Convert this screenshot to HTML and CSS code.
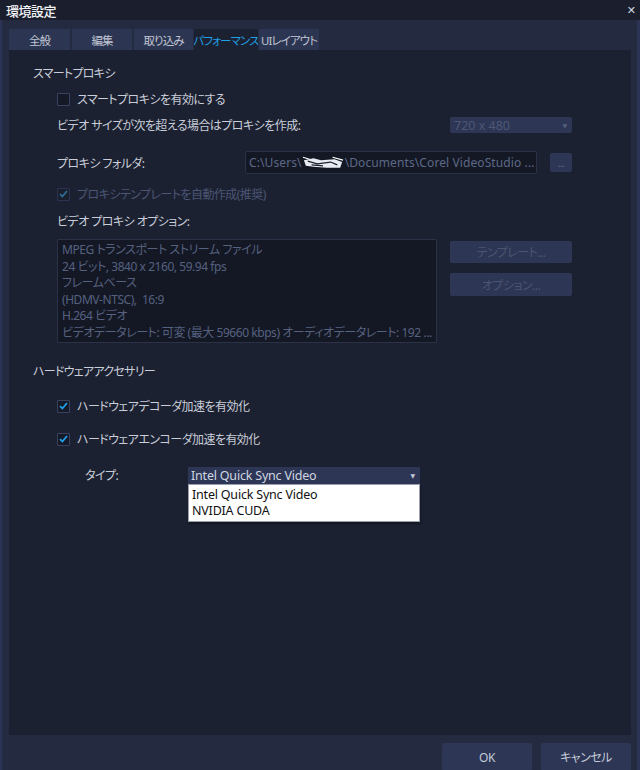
FILE: index.html
```html
<!DOCTYPE html>
<html lang="ja">
<head>
<meta charset="utf-8">
<title>環境設定</title>
<link rel="stylesheet" href="styles.css">
</head>
<body>
<div class="window">
  <div class="titlebar">
    <span class="title">環境設定</span>
    <span class="close">✕</span>
  </div>
  <div class="body">
    <div class="tabs">
      <div class="tab t1">全般</div>
      <div class="tab t2">編集</div>
      <div class="tab t3">取り込み</div>
      <div class="tab t4 active">パフォーマンス</div>
      <div class="tab t5">UIレイアウト</div>
    </div>
    <div class="panel">
      <div class="heading h1">スマートプロキシ</div>

      <div class="row r-check1">
        <span class="cb"></span><span class="lbl">スマートプロキシを有効にする</span>
      </div>

      <div class="row r-size">
        <span class="lbl">ビデオ サイズが次を超える場合はプロキシを作成:</span>
        <div class="select dim-select"><span>720 x 480</span><span class="arrow">▼</span></div>
      </div>

      <div class="row r-folder">
        <span class="lbl">プロキシ フォルダ:</span>
        <div class="folder-ctrls">
          <div class="input">C:\Users\<svg class="scribble" width="42" height="14" viewBox="0 0 44 14"><path d="M2 4 L12 2 L20 4 L34 3 L42 6 L40 12 L26 12 L12 11 L4 10 Z" fill="#e8ebf2"/><path d="M6 5 L16 8 L30 6 L37 9 M10 9 L22 10" stroke="#1a1f2d" stroke-width="1.3" fill="none"/><path d="M1 1 L8 3 M32 1 L43 4" stroke="#ffffff" stroke-width="1.2"/></svg>\Documents\Corel VideoStudio ...</div>
          <div class="btn small">...</div>
        </div>
      </div>

      <div class="row r-auto disabled">
        <span class="cb checked dim"><svg width="9" height="8" viewBox="0 0 9 8"><path d="M1 4.2 L3.4 6.5 L8 1" stroke="#2d6e95" stroke-width="1.8" fill="none"/></svg></span><span class="lbl">プロキシテンプレートを自動作成(推奨)</span>
      </div>

      <div class="row r-opt">
        <span class="lbl">ビデオ プロキシ オプション:</span>
      </div>

      <div class="row r-info">
        <div class="infobox">
          <div>MPEG トランスポート ストリーム ファイル</div>
          <div>24 ビット, 3840 x 2160, 59.94 fps</div>
          <div>フレームベース</div>
          <div>(HDMV-NTSC),&nbsp; 16:9</div>
          <div>H.264 ビデオ</div>
          <div class="clip">ビデオデータレート: 可変 (最大 59660 kbps) オーディオデータレート: 192 ...</div>
        </div>
        <div class="side-btns">
          <div class="btn wide b-tpl">テンプレート...</div>
          <div class="btn wide b-opt">オプション...</div>
        </div>
      </div>

      <div class="heading h2">ハードウェアアクセサリー</div>

      <div class="row r-dec">
        <span class="cb checked"><svg width="9" height="8" viewBox="0 0 9 8"><path d="M1 4.2 L3.4 6.5 L8 1" stroke="#1ea0ea" stroke-width="1.8" fill="none"/></svg></span><span class="lbl">ハードウェアデコーダ加速を有効化</span>
      </div>

      <div class="row r-enc">
        <span class="cb checked"><svg width="9" height="8" viewBox="0 0 9 8"><path d="M1 4.2 L3.4 6.5 L8 1" stroke="#1ea0ea" stroke-width="1.8" fill="none"/></svg></span><span class="lbl">ハードウェアエンコーダ加速を有効化</span>
      </div>

      <div class="row r-type">
        <span class="lbl type-lbl">タイプ:</span>
        <div class="type-wrap">
          <div class="select type-select"><span>Intel Quick Sync Video</span><span class="arrow">▼</span></div>
          <div class="dropdown">
            <div class="opt">Intel Quick Sync Video</div>
            <div class="opt">NVIDIA CUDA</div>
          </div>
        </div>
      </div>
    </div>
    <div class="footer">
      <div class="btn foot">OK</div>
      <div class="btn foot">キャンセル</div>
    </div>
  </div>
</div>
</body>
</html>
```

FILE: styles.css
```css
* { box-sizing: border-box; }
html, body { margin: 0; padding: 0; background: #1c2030; }
body {
  font-family: "Segoe UI", "Noto Sans", "Noto Sans CJK JP", sans-serif;
  font-size: 12px;
  color: #c9ced9;
  font-feature-settings: "palt" 1;
}
.window {
  width: 640px;
  height: 770px;
  display: flex;
  flex-direction: column;
  overflow: hidden;
  background: #242b40;
}
.titlebar {
  height: 20px;
  flex: none;
  background: #1b1f2d;
  display: flex;
  align-items: center;
  justify-content: space-between;
  padding: 0 4px 0 6px;
}
.title {
  font-family: "Noto Sans CJK JP", sans-serif;
  font-size: 13px;
  font-weight: 500;
  color: #f2f4f8;
  letter-spacing: -0.5px;
}
.close {
  font-size: 11px;
  font-weight: 900;
  color: #cfd4e2;
  font-family: "DejaVu Sans", sans-serif;
}
.body {
  flex: 1;
  display: flex;
  flex-direction: column;
  border-left: 2px solid #2b3454;
  border-right: 3px solid #2b3454;
  padding: 9px 6px 0 7px;
  min-height: 0;
}
.tabs {
  display: flex;
  height: 21px;
  flex: none;
  gap: 2px;
}
.tab {
  background: #2c3551;
  color: #c0c6d4;
  font-size: 11.5px;
  letter-spacing: -0.9px;
  white-space: nowrap;
  display: flex;
  align-items: center;
  justify-content: center;
  height: 21px;
  overflow: hidden;
}
.t1 { width: 61px; }
.t2 { width: 60px; }
.t3 { width: 59px; }
.t4 { width: 64px; margin-left: -1px; }
.t5 { width: 60px; margin-left: -1px; }
.tab.active { background: #1c2131; color: #1ea0e6; }
.panel {
  flex: none;
  height: 685px;
  background: #1c2131;
  padding: 13px 59px 0 24px;
  display: flex;
  flex-direction: column;
  position: relative;
}
.heading {
  height: 20px;
  display: flex;
  align-items: center;
  letter-spacing: -0.7px;
  color: #c9ced9;
}
.lbl {
  letter-spacing: -0.55px;
  white-space: nowrap;
}
.row {
  display: flex;
  align-items: center;
  padding-left: 24px;
}
.r-check1 { height: 20px; margin-top: 6px; }
.r-size { height: 20px; margin-top: 6px; justify-content: space-between; }
.r-folder { height: 23px; margin-top: 16px; justify-content: space-between; }
.r-auto { height: 20px; margin-top: 10px; }
.r-opt { height: 20px; margin-top: 7px; }
.r-info { margin-top: 8px; align-items: flex-start; justify-content: space-between; }
.h2 { margin-top: 18px; }
.r-dec { height: 20px; margin-top: 15px; }
.r-enc { height: 20px; margin-top: 13px; }
.r-type { height: 20px; margin-top: 16px; padding-left: 52px; justify-content: flex-start; }

.cb {
  width: 13px;
  height: 13px;
  flex: none;
  border: 1px solid #3a4262;
  background: #161a27;
  margin-right: 7px;
  border-radius: 1px;
  display: flex;
  align-items: center;
  justify-content: center;
}
.cb.dim { border-color: #2c3350; background: #1a1f2e; }
.disabled .lbl { color: #4b5574; }

.select {
  display: flex;
  align-items: center;
  justify-content: space-between;
  background: #2d3654;
  border-radius: 2px;
  padding: 0 5px 0 4px;
}
.arrow { font-size: 6px; color: #8d96b0; font-family: "DejaVu Sans", sans-serif; }
.dim-select {
  width: 122px;
  height: 16px;
  color: #4d5878;
  font-size: 12.5px;
}
.dim-select .arrow { color: #55607e; }

.folder-ctrls { display: flex; align-items: center; gap: 13px; }
.input {
  width: 292px;
  height: 23px;
  background: #141824;
  border: 1px solid #2b3147;
  border-radius: 2px;
  color: #5d6887;
  font-size: 12px;
  display: flex;
  align-items: center;
  padding-left: 3px;
  white-space: nowrap;
  overflow: hidden;
  letter-spacing: 0.1px;
}
.scribble { flex: none; margin: 0 1px 0 0; }

.btn {
  background: #2d3654;
  border-radius: 2px;
  display: flex;
  align-items: center;
  justify-content: center;
  color: #4b5572;
  letter-spacing: -0.5px;
  white-space: nowrap;
}
.btn.small { width: 22px; height: 19px; font-size: 10px; color: #5d6886; }
.infobox {
  width: 380px;
  height: 104px;
  background: #141824;
  border: 1px solid #2b3147;
  border-radius: 1px;
  color: #566180;
  font-size: 12px;
  line-height: 16.5px;
  padding: 2px 3px 0 4px;
  letter-spacing: -0.45px;
  white-space: nowrap;
  overflow: hidden;
}
.clip { overflow: hidden; text-overflow: clip; }
.side-btns { display: flex; flex-direction: column; gap: 10px; padding-top: 2px; }
.btn.wide { width: 122px; height: 22px; }
.b-opt { height: 23px !important; }

.type-lbl { width: 103px; }
.type-wrap { position: relative; }
.type-select {
  width: 232px;
  height: 17px;
  color: #d0d5e2;
  font-size: 12.5px;
  border-radius: 0;
  padding-left: 3px;
  letter-spacing: -0.2px;
}
.type-select .arrow { color: #c2c8d8; }
.dropdown {
  position: absolute;
  top: 17px;
  left: 0;
  width: 232px;
  height: 38px;
  background: #ffffff;
  border: 1px solid #9aa0ad;
  box-shadow: 1px 2px 2px rgba(0,0,0,0.35);
  padding: 2px 0 0 3px;
  color: #111;
  font-size: 12.5px;
  letter-spacing: -0.2px;
}
.opt { line-height: 16.5px; }

.footer {
  flex: 1;
  display: flex;
  justify-content: flex-end;
  align-items: flex-start;
  gap: 9px;
  padding-top: 8px;
}
.btn.foot {
  width: 90px;
  height: 28px;
  color: #c4cad8;
  font-size: 12px;
}
```
